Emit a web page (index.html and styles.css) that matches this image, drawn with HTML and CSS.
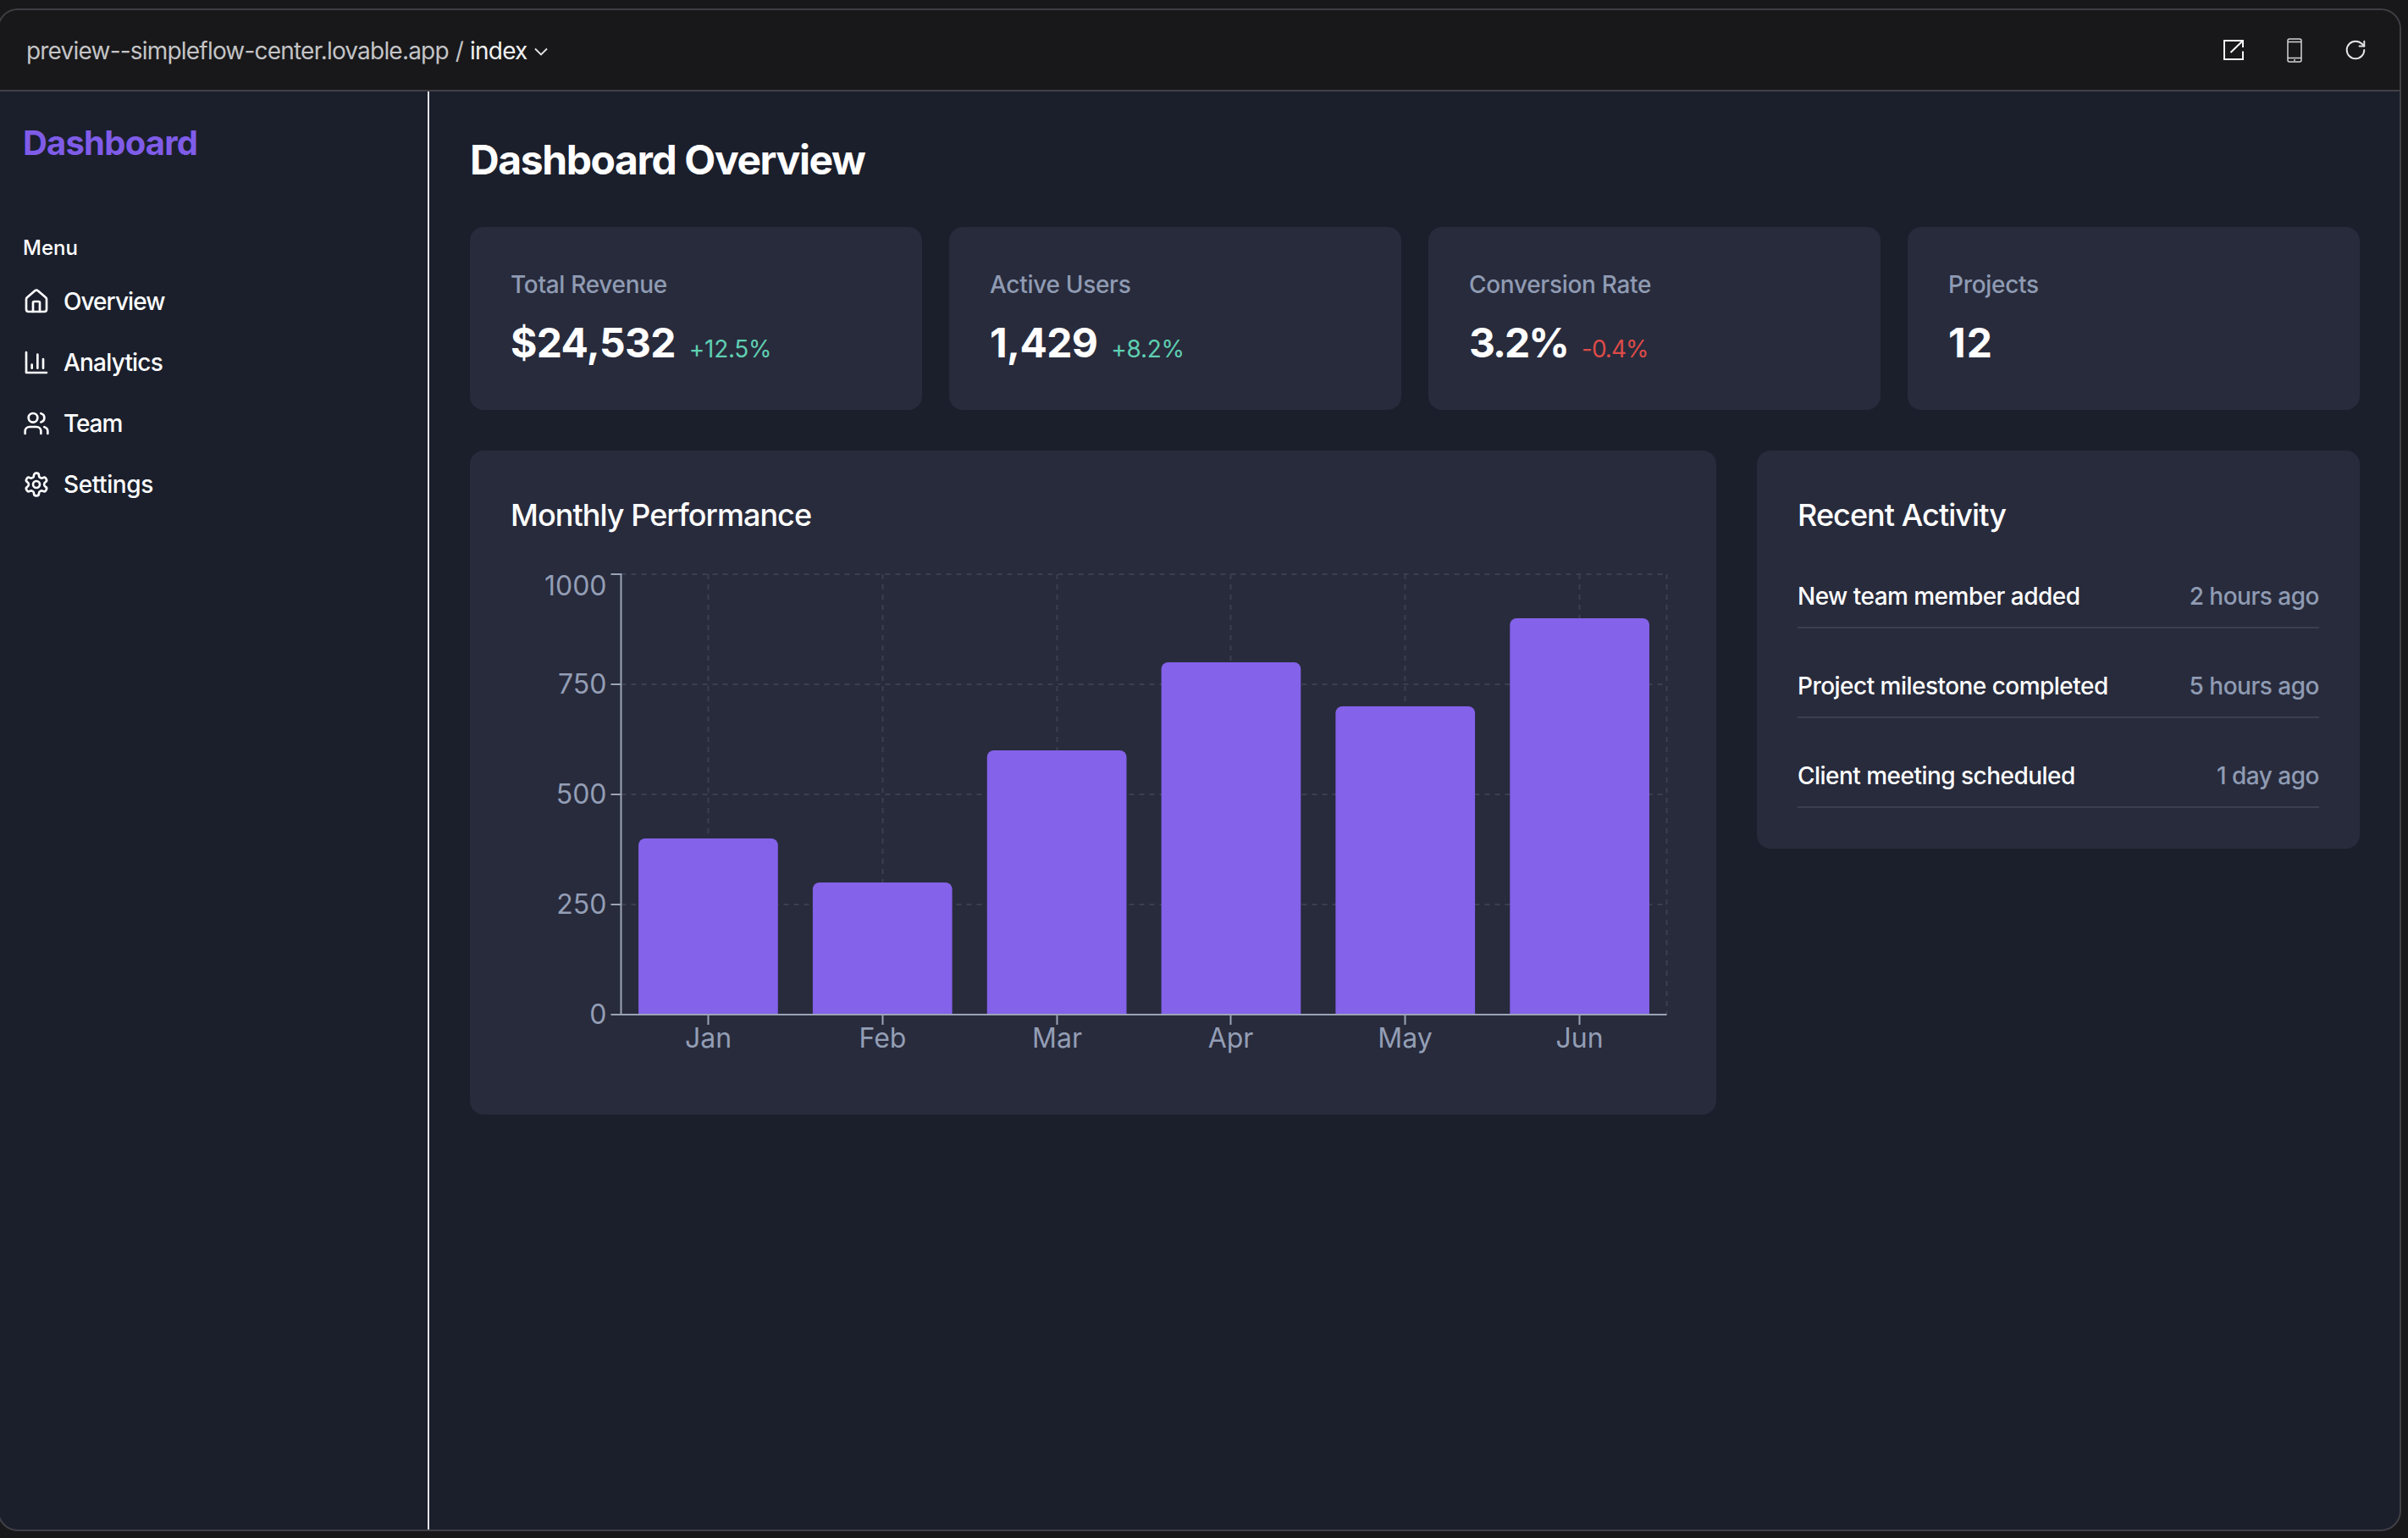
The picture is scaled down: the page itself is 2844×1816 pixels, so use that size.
FILE: index.html
```html
<!DOCTYPE html>
<html lang="en">
<head>
<meta charset="utf-8">
<title>Dashboard</title>
<link rel="stylesheet" href="styles.css">
</head>
<body>
<div class="frame">
  <header class="topbar">
    <div class="address">
      <span>preview--simpleflow-center.lovable.app</span>
      <span class="slash">/</span>
      <span class="route">index</span>
      <svg class="chevron" viewBox="0 0 16 10"><path d="M1 1.500 8 8.500l7-7"/></svg>
    </div>
    <div class="tools">
      <svg class="tool tool-open" viewBox="0 0 24 24"><path d="M23 9V1H1v22h22v-9.500M23 1 8.500 15"/></svg>
      <svg class="tool tool-phone" viewBox="0 0 18 29"><rect x="1" y="1" width="16" height="27" rx="2"/><path d="M1 4.500h16M1 23.500h16M8 26h2"/></svg>
      <svg class="tool tool-reload" viewBox="1.500 1.500 21 21"><path d="M21 12a9 9 0 1 1-9-9c2.520 0 4.930 1 6.740 2.740L21 8"/><path d="M21 3v5h-5"/></svg>
    </div>
  </header>
  <div class="app">
    <aside class="sidebar">
      <div class="logo">Dashboard</div>
      <div class="menu-label">Menu</div>
      <nav class="nav">
        <a class="nav-item nav-overview"><svg class="nav-icon" viewBox="0 0 24 24"><path d="M3 10a2 2 0 0 1 .71-1.530l7-6a2 2 0 0 1 2.580 0l7 6A2 2 0 0 1 21 10v9a2 2 0 0 1-2 2H5a2 2 0 0 1-2-2z"/><path d="M9 21v-8a1 1 0 0 1 1-1h4a1 1 0 0 1 1 1v8"/></svg><span>Overview</span></a>
        <a class="nav-item nav-analytics"><svg class="nav-icon" viewBox="0 0 24 24"><path d="M3 3v18h18M18 17V9M13 17V5M8 17v-3"/></svg><span>Analytics</span></a>
        <a class="nav-item nav-team"><svg class="nav-icon" viewBox="0 0 24 24"><path d="M16 21v-2a4 4 0 0 0-4-4H6a4 4 0 0 0-4 4v2"/><circle cx="9" cy="7" r="4"/><path d="M22 21v-2a4 4 0 0 0-3-3.870M16 3.130a4 4 0 0 1 0 7.750"/></svg><span>Team</span></a>
        <a class="nav-item nav-settings"><svg class="nav-icon" viewBox="0 0 24 24"><path d="M12.220 2h-.44a2 2 0 0 0-2 2v.18a2 2 0 0 1-1 1.730l-.43.25a2 2 0 0 1-2 0l-.15-.08a2 2 0 0 0-2.730.73l-.22.38a2 2 0 0 0 .73 2.730l.15.1a2 2 0 0 1 1 1.720v.51a2 2 0 0 1-1 1.740l-.15.09a2 2 0 0 0-.73 2.730l.22.38a2 2 0 0 0 2.730.73l.15-.08a2 2 0 0 1 2 0l.43.25a2 2 0 0 1 1 1.730V20a2 2 0 0 0 2 2h.44a2 2 0 0 0 2-2v-.18a2 2 0 0 1 1-1.730l.43-.25a2 2 0 0 1 2 0l.15.08a2 2 0 0 0 2.730-.73l.22-.39a2 2 0 0 0-.73-2.730l-.15-.08a2 2 0 0 1-1-1.740v-.5a2 2 0 0 1 1-1.740l.15-.09a2 2 0 0 0 .73-2.730l-.22-.38a2 2 0 0 0-2.730-.73l-.15.08a2 2 0 0 1-2 0l-.43-.25a2 2 0 0 1-1-1.730V4a2 2 0 0 0-2-2z"/><circle cx="12" cy="12" r="3"/></svg><span>Settings</span></a>
      </nav>
    </aside>
    <main class="main">
      <h1 class="page-title">Dashboard Overview</h1>
      <section class="stats">
        <div class="card stat"><div class="stat-label">Total Revenue</div><div class="stat-row"><span class="stat-value">$24,532</span><span class="delta up">+12.5%</span></div></div>
        <div class="card stat"><div class="stat-label">Active Users</div><div class="stat-row"><span class="stat-value">1,429</span><span class="delta up">+8.2%</span></div></div>
        <div class="card stat"><div class="stat-label">Conversion Rate</div><div class="stat-row"><span class="stat-value stat-percent">3.2%</span><span class="delta down">-0.4%</span></div></div>
        <div class="card stat"><div class="stat-label">Projects</div><div class="stat-row"><span class="stat-value stat-count">12</span></div></div>
      </section>
      <section class="panels">
        <div class="card panel chart-panel">
          <h2 class="panel-title">Monthly Performance</h2>
          <svg class="chart" viewBox="0 0 1375 600">
            <g class="grid-lines">
              <path d="M130 10H1365M130 140H1365M130 270H1365M130 400H1365"/>
              <path d="M233 10V530M439 10V530M645 10V530M850 10V530M1056 10V530M1262 10V530M1365 10V530"/>
            </g>
            <g class="bars">
              <path d="M150.600 530V330a8 8 0 0 1 8-8h148.700a8 8 0 0 1 8 8V530z"/>
              <path d="M356.400 530V382a8 8 0 0 1 8-8h148.700a8 8 0 0 1 8 8V530z"/>
              <path d="M562.300 530V226a8 8 0 0 1 8-8h148.700a8 8 0 0 1 8 8V530z"/>
              <path d="M768.100 530V122a8 8 0 0 1 8-8h148.700a8 8 0 0 1 8 8V530z"/>
              <path d="M973.900 530V174a8 8 0 0 1 8-8h148.700a8 8 0 0 1 8 8V530z"/>
              <path d="M1179.800 530V70a8 8 0 0 1 8-8h148.700a8 8 0 0 1 8 8V530z"/>
            </g>
            <g class="axes">
              <path d="M118 10H130V530M118 140H130M118 270H130M118 400H130M118 530H1365M233 530V542M439 530V542M645 530V542M850 530V542M1056 530V542M1262 530V542"/>
            </g>
            <g class="y-labels">
              <text x="113" y="35">1000</text>
              <text x="113" y="151">750</text>
              <text x="113" y="281">500</text>
              <text x="113" y="411">250</text>
              <text x="113" y="541">0</text>
            </g>
            <g class="x-labels">
              <text x="233" y="569">Jan</text>
              <text x="439" y="569">Feb</text>
              <text x="645" y="569">Mar</text>
              <text x="850" y="569">Apr</text>
              <text x="1056" y="569">May</text>
              <text x="1262" y="569">Jun</text>
            </g>
          </svg>
        </div>
        <div class="card panel activity-panel">
          <h2 class="panel-title">Recent Activity</h2>
          <ul class="activity">
            <li class="activity-row"><span>New team member added</span><span class="when">2 hours ago</span></li>
            <li class="activity-row"><span>Project milestone completed</span><span class="when">5 hours ago</span></li>
            <li class="activity-row"><span>Client meeting scheduled</span><span class="when">1 day ago</span></li>
          </ul>
        </div>
      </section>
    </main>
  </div>
</div>
</body>
</html>
```

FILE: styles.css
```css
* { box-sizing: border-box; }
html, body { height: 100%; margin: 0; }
body {
  background: #18181a;
  color: #fff;
  font-family: Inter, "Liberation Sans", sans-serif;
  font-size: 28px;
  line-height: 40px;
  overflow: hidden;
}
.frame {
  width: 2839px;
  height: 1798px;
  margin: 10px 0 0 -3px;
  border: 2px solid #3f3f45;
  border-radius: 24px;
  display: flex;
  flex-direction: column;
  overflow: hidden;
  background: #1b1f2c;
}
.topbar {
  height: 96px;
  flex: none;
  background: #18181a;
  border-bottom: 2px solid #3f3f45;
  display: flex;
  align-items: center;
  justify-content: space-between;
  padding: 0 40px 0 32px;
}
.address { display: flex; align-items: center; color: #c4c4c6; letter-spacing: -0.8px; margin-top: 2px; }
.slash { margin: 0 8px; }
.route { color: #f2f2f3; }
.chevron { width: 16px; height: 10px; margin-left: 8px; margin-top: 2px; fill: none; stroke: #e4e4e6; stroke-width: 1.8; }
.tools { display: flex; align-items: center; gap: 51px; }
.tool { fill: none; stroke: #f4f4f5; stroke-width: 2; display: block; }
.tool-open { width: 24px; height: 24px; }
.tool-phone { width: 18px; height: 29px; stroke: #d4d4d8; stroke-width: 1.5; }
.tool-reload { width: 24px; height: 24px; stroke: #e4e4e7; stroke-width: 1.75; stroke-linecap: round; stroke-linejoin: round; }
.app { flex: 1; display: flex; min-height: 0; }
.sidebar {
  width: 508px;
  flex: none;
  border-right: 2px solid #e2e4ea;
  padding: 23px 28px;
}
.logo { font-size: 40px; line-height: 76px; font-weight: 700; color: #7f5ce8; letter-spacing: -0.8px; }
.menu-label { font-size: 24px; line-height: 32px; font-weight: 500; margin-top: 70px; }
.nav { display: flex; flex-direction: column; margin-top: 11px; }
.nav-item { height: 72px; display: flex; align-items: center; gap: 16px; font-weight: 450; }
.nav-overview { letter-spacing: -0.95px; }
.nav-analytics { letter-spacing: -0.8px; }
.nav-team { letter-spacing: -1.1px; }
.nav-settings { letter-spacing: -0.4px; }
.nav-icon { width: 32px; height: 32px; fill: none; stroke: #fff; stroke-width: 2; stroke-linecap: round; stroke-linejoin: round; flex: none; }
.main { flex: 1; padding: 48px 47px 48px 48px; min-width: 0; }
.page-title { font-size: 48px; line-height: 64px; font-weight: 700; margin: 1px 0 47px; letter-spacing: -1.4px; }
.stats { display: grid; grid-template-columns: repeat(4, 1fr); gap: 32px; margin-bottom: 48px; }
.card { background: #282b3c; border-radius: 16px; padding: 48px; }
.stat-label { color: #8f9bb3; font-weight: 500; letter-spacing: -0.3px; }
.stat-row { margin-top: 17px; display: flex; align-items: baseline; gap: 16px; line-height: 63px; height: 63px; }
.stat-value { font-size: 48px; font-weight: 700; letter-spacing: -0.65px; }
.stat-percent { letter-spacing: -2px; }
.stat-count { letter-spacing: 1.15px; }
.delta { font-size: 28px; letter-spacing: -0.3px; }
.up { color: #5fcfb2; }
.down { color: #dd4b48; letter-spacing: -1px; }
.panels { display: grid; grid-template-columns: repeat(3, 1fr); gap: 48px; align-items: start; }
.chart-panel { grid-column: span 2; }
.panel-title { font-size: 36px; line-height: 56px; font-weight: 500; margin: 0 0 32px; letter-spacing: -0.95px; }
.chart { display: block; width: 100%; height: 600px; }
.grid-lines path { fill: none; stroke: #3b3f50; stroke-width: 2; stroke-dasharray: 6 6; }
.bars path { fill: #8462ea; }
.axes path { fill: none; stroke: #9aa4b6; stroke-width: 2; }
.y-labels text, .x-labels text { font-size: 32px; fill: #939eb5; }
.y-labels text { text-anchor: end; }
.x-labels text { text-anchor: middle; }
.activity { list-style: none; margin: 0; padding: 0; display: flex; flex-direction: column; gap: 32px; }
.activity-row { display: flex; justify-content: space-between; padding: 16px 0; border-bottom: 2px solid #3b3f50; letter-spacing: -0.53px; font-weight: 450; }
.when { color: #8f9bb3; letter-spacing: -0.5px; }
```
